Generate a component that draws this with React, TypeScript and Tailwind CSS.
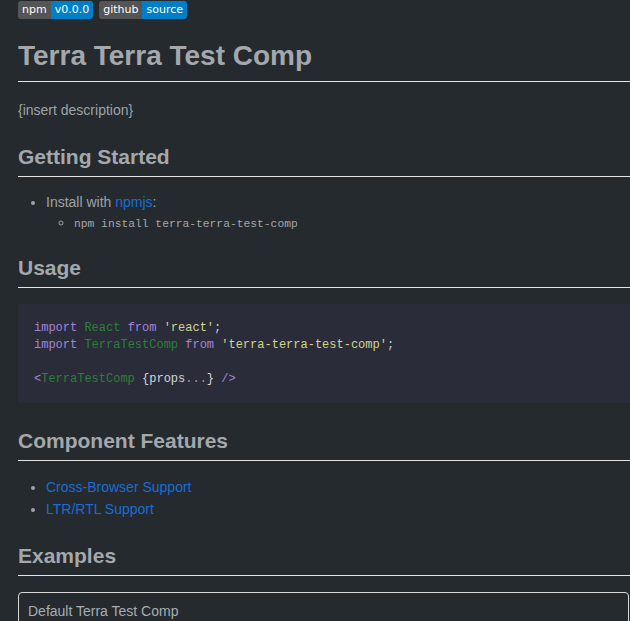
import React from 'react';

const sans = { fontFamily: '"Liberation Sans", Arial, sans-serif' };

function Badge({ left, right }: { left: string; right: string }) {
  return (
    <span className="flex h-[18px] rounded-[3px] overflow-hidden text-[11px] leading-[18px] text-white" style={{ fontFamily: '"DejaVu Sans", Verdana, sans-serif' }}>
      <span className="bg-[#555555] px-[4px]">{left}</span>
      <span className="bg-[#007ec6] px-[4px]">{right}</span>
    </span>
  );
}

function H2({ children, className = '' }: { children: React.ReactNode; className?: string }) {
  return (
    <h2 className={`text-[21px] leading-[26px] font-bold text-[#a4a8ac] pb-[6px] border-b border-[#e4e4e4] ${className}`}>
      {children}
    </h2>
  );
}

export default function App() {
  return (
    <div className="min-h-screen bg-[#242a2e] pl-[18px] pt-[1px] text-[14px] text-[#9ea3a8] overflow-hidden" style={sans}>
      {/* badges */}
      <div className="flex gap-[6px]">
        <Badge left="npm" right="v0.0.0" />
        <Badge left="github" right="source" />
      </div>

      <h1 className="mt-[19px] text-[28px] leading-[35px] font-bold text-[#a4a8ac] pb-[8px] border-b border-[#e4e4e4]">
        Terra Terra Test Comp
      </h1>

      <p className="mt-[18px] leading-[20px]">{'{insert description}'}</p>

      <H2 className="mt-[24px]">Getting Started</H2>
      <ul className="mt-[15px] list-disc pl-[28px] leading-[20px]">
        <li>
          Install with <a className="text-[#1a6dd6]">npmjs</a>:
          <ul className="list-[circle] pl-[28px]">
            <li>
              <code className="text-[11.3px] text-[#a3a7ab]" style={{ fontFamily: '"Liberation Mono", monospace' }}>
                npm install terra-terra-test-comp
              </code>
            </li>
          </ul>
        </li>
      </ul>

      <H2 className="mt-[21px]">Usage</H2>
      <pre className="mt-[16px] bg-[#2a2d39] pl-[16px] pt-[16px] pb-[15px] text-[12px] leading-[17px] text-[#c8c8c8]" style={{ fontFamily: '"Liberation Mono", monospace' }}>
        <span className="text-[#a582d8]">import</span> <span className="text-[#2c7f38]">React</span> <span className="text-[#a582d8]">from</span> <span className="text-[#d4d48a]">'react'</span>;{'\n'}
        <span className="text-[#a582d8]">import</span> <span className="text-[#2c7f38]">TerraTestComp</span> <span className="text-[#a582d8]">from</span> <span className="text-[#d4d48a]">'terra-terra-test-comp'</span>;{'\n'}
        {'\n'}
        <span className="text-[#a582d8]">&lt;</span><span className="text-[#2c7f38]">TerraTestComp</span> <span className="text-[#d6d6d6]">{'{props'}</span><span className="text-[#9a9a9a]">...</span><span className="text-[#d6d6d6]">{'}'}</span> <span className="text-[#a582d8]">/&gt;</span>
      </pre>

      <H2 className="mt-[25px]">Component Features</H2>
      <ul className="mt-[15px] list-disc pl-[28px] leading-[22px]">
        <li><a className="text-[#1a6dd6]">Cross-Browser Support</a></li>
        <li><a className="text-[#1a6dd6]">LTR/RTL Support</a></li>
      </ul>

      <H2 className="mt-[23px]">Examples</H2>
      <div className="mt-[16px] mr-[1px] border border-[#d8d8d8] rounded-t-[4px] px-[9px] pt-[8px] pb-[20px]">
        <p className="leading-[20px] text-[#a9adb1]">Default Terra Test Comp</p>
      </div>
    </div>
  );
}
